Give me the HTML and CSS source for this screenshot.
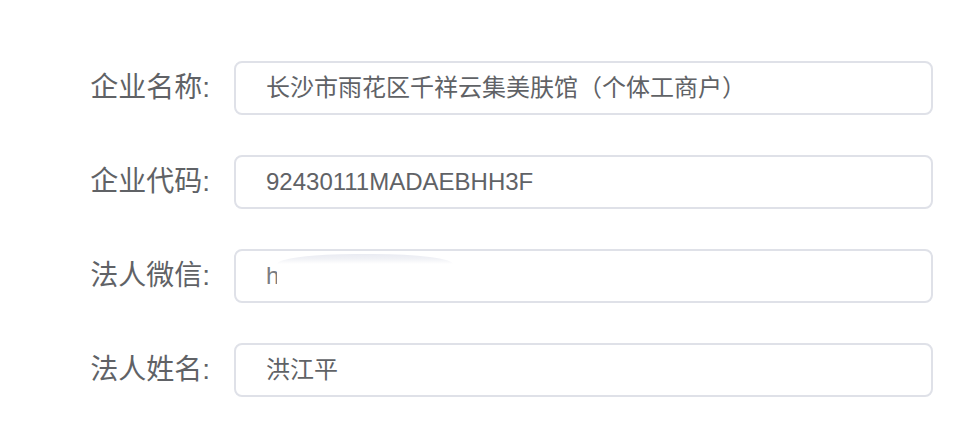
FILE: index.html
```html
<!DOCTYPE html>
<html lang="zh-CN">
<head>
  <meta charset="UTF-8" />
  <title>企业信息</title>
  <link rel="stylesheet" href="styles.css">
</head>
<body>

<div class="form">
  <div class="row">
    <label class="label">企业名称:</label>
    <div class="input">长沙市雨花区千祥云集美肤馆（个体工商户）</div>
  </div>
  <div class="row">
    <label class="label">企业代码:</label>
    <div class="input">92430111MADAEBHH3F</div>
  </div>
  <div class="row">
    <label class="label">法人微信:</label>
    <div class="input masked">h<span class="smear"></span></div>
  </div>
  <div class="row">
    <label class="label">法人姓名:</label>
    <div class="input">洪江平</div>
  </div>
</div>

</body>
</html>
```

FILE: styles.css
```css
body { margin: 0; background: #ffffff; font-family: "Liberation Sans", "Noto Sans CJK SC", sans-serif; color: #606266; }
.form { padding: 61px 0 0 0; display: flex; flex-direction: column; gap: 40px; }
.row { display: flex; align-items: center; gap: 24px; }
.label { width: 210px; text-align: right; font-size: 28px; line-height: 54px; color: #606266; }
.input { box-sizing: border-box; width: 699px; height: 54px; border: 2px solid #dfe1e8; border-radius: 8px; padding-left: 30px; font-size: 24px; line-height: 50px; color: #606266; white-space: nowrap; overflow: hidden; }
.masked { position: relative; color: #7a7c82; }
.smear { position: absolute; left: 41px; top: 3px; width: 176px; height: 34px; border-radius: 45% 45% 10% 10% / 30% 30% 10% 10%; background: linear-gradient(#e9ebf2 0, #f1f2f6 5px, #ffffff 10px, #ffffff 100%); filter: blur(0.6px); }
```
